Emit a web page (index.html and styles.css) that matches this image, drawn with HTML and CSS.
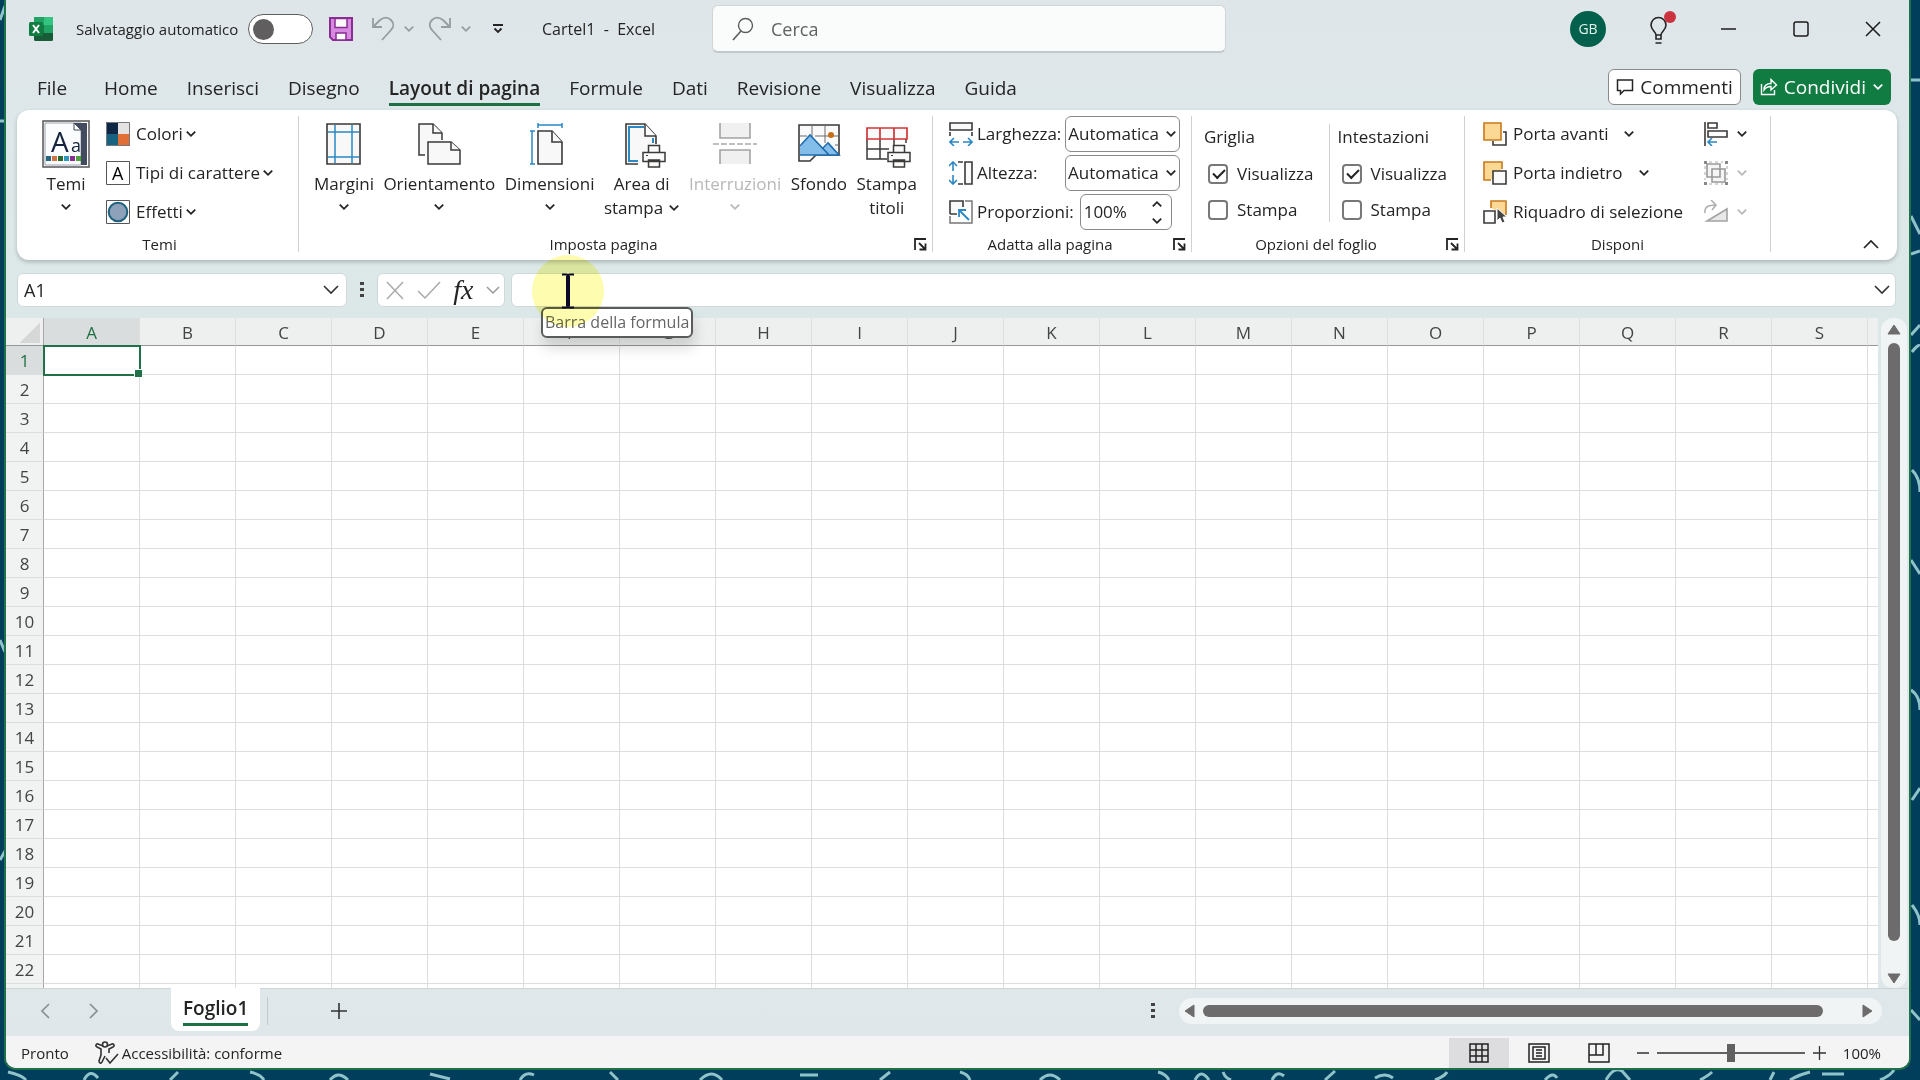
FILE: index.html
```html
<!DOCTYPE html>
<html lang="it">
<head>
    <meta charset="UTF-8">
    <title>Cartel1 - Excel</title>
    <link rel="stylesheet" href="styles.css">
</head>
<body>
    <svg class="symbols" width="0" height="0">
        <symbol id="chev" viewBox="0 0 10 10"><path d="M1.5 3l3.5 3.5L8.5 3" fill="none" stroke="currentColor" stroke-width="1.5"/></symbol>
        <symbol id="launch" viewBox="0 0 13 13"><path d="M1 12V1h11M5 5l6 6M11.5 5.500v6h-6" fill="none" stroke="currentColor" stroke-width="1.8"/></symbol>
        <symbol id="printer" viewBox="0 0 24 24"><path d="M6.500 8V1.500h11V8M1 8.500h22v9H1zM6.500 16h11v7h-11z" fill="#fafafa" stroke="#3b3a39" stroke-width="1.500"/><path d="M4 11.500h2" stroke="#3b3a39"/></symbol>
    </svg>
    <svg class="wallpaper" viewBox="0 0 1920 1080" preserveAspectRatio="none">
        <g fill="none" stroke="#8fc3c9" stroke-width="3">
            <path d="M0 20l5-14M0 121h6M1911 80h9M1911 216l9 18M1911 254l9-3M1912 352q6-8 8-6M1911 335l9-10M1912 470q8 8 8 22M1911 560l9 14M1911 690q9 6 9 20M1912 800l8-12M1912 905q8 10 8 20M1911 1010l9 10M0 640l5 12M0 860l5-9"/>
            <path d="M8 1072q14 3 18 8M84 1080q6-12 14-2M170 1080l8-8M250 1072q10 2 14 8M330 1080q8-10 18 0M430 1074l20 5M520 1080q5-9 14-5M610 1072l8 8M700 1080q12-12 22 0M800 1075h18M880 1080l10-8M960 1072q8 2 10 8M1040 1080q10-10 20 0M1158 1072q8 2 11 8M1195 1080q6-12 14 0M1223 1072q2 6 8 8M1272 1080q5-10 12-4M1325 1080l10-9M1375 1078q10-6 18 0M1435 1080q10-4 12-8M1545 1080q8-9 12-2M1606 1080q8-14 16-9l8 9M1700 1080q8-4 12-8M1770 1080l4-8M1790 1080q8-5 20-8M1822 1074h22M1880 1080q10-4 14-10"/>
        </g>
    </svg>

    <div class="window">
        <header class="titlebar">
            <svg class="app-logo" width="26" height="26" viewBox="0 0 26 26">
                <rect x="6" y="1" width="19" height="24" rx="1.500" fill="#185c37"/>
                <path d="M6 1h10v8H6z" fill="#21a366"/><path d="M16 1h9v8h-9z" fill="#33c481"/><path d="M6 9h10v8H6z" fill="#107c41"/><path d="M16 9h9v8h-9z" fill="#21a366"/>
                <rect x="1" y="6" width="14" height="14" rx="1.500" fill="#107c41"/>
                <path d="M5 9l6 8M11 9l-6 8" stroke="#fff" stroke-width="2"/>
            </svg>
            <label class="autosave" for="autosave">Salvataggio automatico</label>
            <input class="toggle" id="autosave" type="checkbox">
            <button class="icon-btn save" aria-label="Salva">
                <svg width="24" height="24" viewBox="0 0 24 24"><path d="M1 1h22v22H4l-3-3z" fill="#d68be0" stroke="#8a2c93" stroke-width="2"/><path d="M6 1.500h12v9H6z" fill="#fafafa" stroke="#8a2c93" stroke-width="1.500"/><path d="M7 23v-7h10v7z" fill="#fff" stroke="#8a2c93" stroke-width="1.500"/></svg>
            </button>
            <button class="icon-btn undo" aria-label="Annulla">
                <svg width="24" height="26" viewBox="0 0 24 26"><path d="M2 2v9h9M2 11l7-7c4-3 8-3 11 0s3 7 0 10l-9 10" fill="none" stroke="#979ca0" stroke-width="1.800"/></svg>
                <svg class="chev"><use href="#chev"/></svg>
            </button>
            <button class="icon-btn undo" aria-label="Ripeti">
                <svg width="24" height="26" viewBox="0 0 24 26"><path d="M22 2v9h-9M22 11l-7-7c-4-3-8-3-11 0s-3 7 0 10l9 10" fill="none" stroke="#979ca0" stroke-width="1.800"/></svg>
                <svg class="chev"><use href="#chev"/></svg>
            </button>
            <button class="icon-btn" aria-label="Personalizza barra">
                <svg width="12" height="12" viewBox="0 0 12 12"><path d="M1 2h10M2.500 5.500L6 9l3.500-3.500" fill="none" stroke="#242424" stroke-width="1.800"/></svg>
            </button>
            <div class="doc-title">Cartel1&nbsp; - &nbsp;Excel</div>
            <div class="search">
                <svg width="24" height="26" viewBox="0 0 24 26"><circle cx="14.500" cy="9.500" r="7" fill="none" stroke="#5c5c5c" stroke-width="1.400"/><path d="M10 15l-8 9" stroke="#5c5c5c" stroke-width="1.600"/></svg>
                <input type="text" placeholder="Cerca" aria-label="Cerca">
            </div>
            <div class="win-controls">
                <button class="avatar">GB</button>
                <button class="icon-btn news" aria-label="Novità">
                    <svg width="32" height="38" viewBox="0 0 32 38"><path d="M9 25c0-3-5-5-5-10a7.500 7.500 0 0 1 15 0c0 5-5 7-5 10zM9 25v4h5v-4M8.500 33h6" transform="translate(1 0)" fill="none" stroke="#242424" stroke-width="1.600"/><circle cx="24" cy="7" r="6" fill="#cc3340"/></svg>
                </button>
                <button class="icon-btn" aria-label="Riduci a icona"><svg width="16" height="16"><path d="M0 8h15" stroke="#1b1b1b" stroke-width="1.500"/></svg></button>
                <button class="icon-btn" aria-label="Ingrandisci"><svg width="16" height="16"><rect x="1" y="1" width="14" height="14" rx="2" fill="none" stroke="#1b1b1b" stroke-width="1.500"/></svg></button>
                <button class="icon-btn" aria-label="Chiudi"><svg width="16" height="16"><path d="M1 1l14 14M15 1L1 15" stroke="#1b1b1b" stroke-width="1.500"/></svg></button>
            </div>
        </header>

        <nav class="tabs">
            <a href="#file" class="first">File</a>
            <a href="#home">Home</a>
            <a href="#inserisci">Inserisci</a>
            <a href="#disegno">Disegno</a>
            <a href="#layout" class="active">Layout di pagina</a>
            <a href="#formule">Formule</a>
            <a href="#dati">Dati</a>
            <a href="#revisione">Revisione</a>
            <a href="#visualizza">Visualizza</a>
            <a href="#guida">Guida</a>
            <div class="tab-actions">
                <button class="comments">
                    <svg width="18" height="18" viewBox="0 0 18 18"><path d="M1.500 2h15v10.500H8L4.500 16v-3.500h-3z" fill="none" stroke="#242424" stroke-width="1.500"/></svg>
                    Commenti
                </button>
                <button class="share">
                    <svg width="18" height="18" viewBox="0 0 18 18"><path d="M1.500 6v10.500h13V12M4 12c0-5 3-6.500 7-6.500V1.500L16.500 7 11 12V8.500C8 8.500 6 9 4 12z" fill="none" stroke="#fff" stroke-width="1.400"/></svg>
                    Condividi
                    <svg class="chev"><use href="#chev"/></svg>
                </button>
            </div>
        </nav>

        <div class="ribbon">
            <section class="group themes">
                <div class="group-body">
                    <button class="big theme-btn">
                        <svg width="48" height="48" viewBox="0 0 48 48">
                            <rect x="1" y="1" width="46" height="46" fill="#fff" stroke="#55565a" stroke-width="1.500"/>
                            <path d="M3 3h36v42H3z" fill="#fbfcfe" stroke="#9ba0aa"/><path d="M32 3h13v42h-6V10z" fill="#434b5e"/><path d="M32 3v7h7z" fill="#fff" stroke="#434b5e"/>
                            <text x="9" y="32" font-size="28" fill="#14233b">A</text><text x="29" y="32" font-size="18" fill="#14233b">a</text>
                            <path d="M4 36h5v5H4z" fill="#28657f"/><path d="M10 36h5v5h-5z" fill="#cf7343"/><path d="M16 36h5v5h-5z" fill="#276b2e"/><path d="M22 36h5v5h-5z" fill="#3196bb"/><path d="M28 36h5v5h-5z" fill="#8b2e92"/><path d="M34 36h5v5h-5z" fill="#4ea33e"/>
                        </svg>
                        <span>Temi</span>
                        <svg class="chev"><use href="#chev"/></svg>
                    </button>
                    <div class="stack">
                        <button class="small">
                            <svg width="24" height="24"><path d="M0 0h12v12H0z" fill="#0f2745"/><path d="M12 0h12v12H12z" fill="#e5e3e1"/><path d="M0 12h12v12H0z" fill="#176280"/><path d="M12 12h12v12H12z" fill="#e16f35"/><path d="M.5.5h23v23H.5z" fill="none" stroke="#74787c"/></svg>
                            Colori <svg class="chev"><use href="#chev"/></svg>
                        </button>
                        <button class="small">
                            <svg width="24" height="24"><path d="M.5.5h23v23H.5z" fill="#fff" stroke="#55565a"/><text x="6" y="19" font-size="18">A</text></svg>
                            Tipi di carattere <svg class="chev"><use href="#chev"/></svg>
                        </button>
                        <button class="small">
                            <svg width="24" height="24"><path d="M.5.5h23v23H.5z" fill="#fff" stroke="#55565a"/><circle cx="12" cy="12" r="9.300" fill="#8ea1bb" stroke="#1d617e" stroke-width="2"/></svg>
                            Effetti <svg class="chev"><use href="#chev"/></svg>
                        </button>
                    </div>
                </div>
                <div class="group-label">Temi</div>
            </section>

            <section class="group page-setup">
                <div class="group-body">
                    <button class="big">
                        <svg width="48" height="48"><path d="M7 4h33v40H7z" fill="#f8f8f8" stroke="#3b3a39" stroke-width="1.600"/><path d="M15 5v38M32 5v38M8 12h31M8 37h31" stroke="#2b88c4" stroke-width="1.500"/></svg>
                        <span>Margini</span>
                        <svg class="chev"><use href="#chev"/></svg>
                    </button>
                    <button class="big">
                        <svg width="48" height="48"><g fill="#f8f8f8" stroke="#3b3a39" stroke-width="1.500"><path d="M10 35H4V4h14l9 9v7"/><path d="M18 4v9h9"/><path d="M13 22h23l9 8v14H13z"/><path d="M36 22v8h9"/></g></svg>
                        <span>Orientamento</span>
                        <svg class="chev"><use href="#chev"/></svg>
                    </button>
                    <button class="big">
                        <svg width="48" height="48"><g fill="#f8f8f8" stroke="#3b3a39" stroke-width="1.600"><path d="M12 11h14l10 11v22H12z"/><path d="M26 11v11h10"/></g><path d="M12 5h24M12 3v5M36 3v5M6 11v33M4 11h5M4 44h5" stroke="#2b88c4" stroke-width="1.500"/></svg>
                        <span>Dimensioni</span>
                        <svg class="chev"><use href="#chev"/></svg>
                    </button>
                    <button class="big">
                        <svg width="48" height="48"><path d="M20 44H8V4h19l11 12v8" fill="#f8f8f8" stroke="#3b3a39" stroke-width="1.600"/><path d="M20 41h-9V7h15M35 18v5" fill="none" stroke="#2b88c4" stroke-width="2"/><path d="M27 4v12h11" fill="#fff" stroke="#3b3a39" stroke-width="1.500"/><svg x="24" y="24" width="24" height="24"><use href="#printer"/></svg></svg>
                        <span>Area di<br>stampa <svg class="chev"><use href="#chev"/></svg></span>
                    </button>
                    <button class="big" disabled>
                        <svg width="48" height="48"><path d="M9 3v15h30V3M9 44V30h30v14" fill="#f0f0f0" stroke="#a3a3a3" stroke-width="1.600"/><path d="M2 24h44" stroke="#a9a9a9" stroke-width="1.500" stroke-dasharray="6 2"/></svg>
                        <span>Interruzioni</span>
                        <svg class="chev"><use href="#chev"/></svg>
                    </button>
                    <button class="big">
                        <svg width="48" height="48"><path d="M4 5h40v30H21l-6 6H4z" fill="#fafafa" stroke="#3b3a39" stroke-width="1.600"/><path d="M17 5v12M30 5v18M4 16h8M20 16h24M40 25h4" stroke="#6a6a6a"/><path d="M5 27l10-12 13 14 6-6 10 12H5z" fill="#83bdea"/><path d="M5 26l10-11 19 20M27 29l6-6 11 12H5" fill="none" stroke="#1d6cae" stroke-width="1.600"/><circle cx="36" cy="15" r="3" fill="#c86d12"/></svg>
                        <span>Sfondo</span>
                    </button>
                    <button class="big">
                        <svg width="48" height="48"><path d="M4 19v20h20M17 19v20M4 29h22M31 19v6M43 19v4" fill="none" stroke="#3b3a39" stroke-width="1.500"/><path d="M4 8h40v11H4zM17 8v11M31 8v11" fill="#fafafa" stroke="#d13438" stroke-width="1.700"/><svg x="24" y="24" width="24" height="24"><use href="#printer"/></svg></svg>
                        <span>Stampa<br>titoli</span>
                    </button>
                </div>
                <div class="group-label">Imposta pagina</div>
                <button class="launcher" aria-label="Imposta pagina"><svg width="13" height="13"><use href="#launch"/></svg></button>
            </section>

            <section class="group scale">
                <div class="group-body stack">
                    <div class="field">
                        <svg width="24" height="24"><path d="M1 1h22v7H1zM1 10v4M23 10v4" fill="#fafafa" stroke="#3b3a39" stroke-width="1.600"/><path d="M10 20H1M14 20h9M5 16l-4 4 4 4M19 16l4 4-4 4" fill="none" stroke="#2b88c4" stroke-width="1.600"/></svg>
                        <label for="larghezza">Larghezza:</label>
                        <div class="select"><select id="larghezza"><option>Automatica</option></select><svg class="chev"><use href="#chev"/></svg></div>
                    </div>
                    <div class="field">
                        <svg width="24" height="24"><path d="M16 1h7v22h-7zM9 1h5M9 23h5" fill="#fafafa" stroke="#3b3a39" stroke-width="1.600"/><path d="M4 10V1M4 14v9M0 5l4-4 4 4M0 19l4 4 4-4" fill="none" stroke="#2b88c4" stroke-width="1.600"/></svg>
                        <label for="altezza">Altezza:</label>
                        <div class="select"><select id="altezza"><option>Automatica</option></select><svg class="chev"><use href="#chev"/></svg></div>
                    </div>
                    <div class="field">
                        <svg width="24" height="24"><path d="M1 14V1h13v6M8 14H1" fill="#fafafa" stroke="#3b3a39" stroke-width="1.600"/><path d="M16 1h7v22H1v-7" fill="none" stroke="#777" stroke-width="1.500"/><path d="M20 20L10 10M10 17v-7h7" fill="none" stroke="#2b88c4" stroke-width="1.800"/></svg>
                        <label for="proporzioni">Proporzioni:</label>
                        <div class="spinner">
                            <input id="proporzioni" type="text" value="100%">
                            <div class="arrows">
                                <svg class="chev up"><use href="#chev"/></svg>
                                <svg class="chev"><use href="#chev"/></svg>
                            </div>
                        </div>
                    </div>
                </div>
                <div class="group-label">Adatta alla pagina</div>
                <button class="launcher" aria-label="Adatta alla pagina"><svg width="13" height="13"><use href="#launch"/></svg></button>
            </section>

            <section class="group sheet-options">
                <div class="group-body">
                    <div class="checks">
                        <h3>Griglia</h3>
                        <label><input type="checkbox" checked>Visualizza</label>
                        <label><input type="checkbox">Stampa</label>
                    </div>
                    <div class="checks">
                        <h3>Intestazioni</h3>
                        <label><input type="checkbox" checked>Visualizza</label>
                        <label><input type="checkbox">Stampa</label>
                    </div>
                </div>
                <div class="group-label">Opzioni del foglio</div>
                <button class="launcher" aria-label="Opzioni del foglio"><svg width="13" height="13"><use href="#launch"/></svg></button>
            </section>

            <section class="group arrange">
                <div class="group-body">
                    <div class="stack">
                        <button class="small wide">
                            <svg width="24" height="24"><path d="M20 10h3v13H10v-4" fill="none" stroke="#3b3a39" stroke-width="1.600"/><path d="M1 1h17v17H1z" fill="#fbd893" stroke="#c8791c" stroke-width="1.600"/></svg>
                            Porta avanti <svg class="chev"><use href="#chev"/></svg>
                        </button>
                        <button class="small wide">
                            <svg width="24" height="24"><path d="M8 19H1V1h18v7" fill="#fbd893" stroke="#c8791c" stroke-width="1.600"/><path d="M10 10h13v13H10z" fill="#fafafa" stroke="#3b3a39" stroke-width="1.600"/></svg>
                            Porta indietro <svg class="chev"><use href="#chev"/></svg>
                        </button>
                        <button class="small">
                            <svg width="24" height="24"><path d="M8 8V1h15v14" fill="#fbd893" stroke="#c8791c" stroke-width="1.600"/><path d="M1 11h11v12H1z" fill="#fafafa" stroke="#3b3a39" stroke-width="1.600"/><path d="M14 8v13l3-3 2 5 3-1-2-5h4z" fill="#444" stroke="#fff"/></svg>
                            Riquadro di selezione
                        </button>
                    </div>
                    <div class="stack">
                        <button class="small" aria-label="Allinea">
                            <svg width="24" height="24"><path d="M1 0v24M4 1h9v5H4zM4 9h19v6H4z" fill="none" stroke="#3b3a39" stroke-width="1.600"/><path d="M13 20H4M8 16l-4 4 4 4" fill="none" stroke="#2b88c4" stroke-width="1.600"/></svg>
                            <svg class="chev"><use href="#chev"/></svg>
                        </button>
                        <button class="small" aria-label="Raggruppa" disabled>
                            <svg width="24" height="24"><path d="M3 3h13v13H3zM8 8h13v13H8z" fill="#eee" fill-opacity=".6" stroke="#999" stroke-width="1.600"/><path d="M0 0h3v3H0zM21 0h3v3h-3zM0 21h3v3H0zM21 21h3v3h-3z" fill="#888"/><path d="M5 1h14M5 23h14M1 5v14M23 5v14" stroke="#aaa" stroke-dasharray="3 3"/></svg>
                            <svg class="chev"><use href="#chev"/></svg>
                        </button>
                        <button class="small" aria-label="Ruota" disabled>
                            <svg width="24" height="24"><path d="M3 21L23 9v12z" fill="#e8e8e8" stroke="#a3a3a3" stroke-width="1.600"/><path d="M1 13c-1-6 3-8 11-8M7 0l5 5-4 5" fill="none" stroke="#b0b0b0" stroke-width="1.600"/></svg>
                            <svg class="chev"><use href="#chev"/></svg>
                        </button>
                    </div>
                </div>
                <div class="group-label">Disponi</div>
            </section>
            <button class="collapse" aria-label="Comprimi barra multifunzione"><svg width="16" height="10"><path d="M1 9l7-7 7 7" fill="none" stroke="#242424" stroke-width="1.600"/></svg></button>
        </div>

        <div class="formula-bar">
            <div class="name-box">
                <input type="text" value="A1" aria-label="Casella Nome">
                <svg width="16" height="10"><path d="M1 1l7 7 7-7" fill="none" stroke="#333" stroke-width="1.600"/></svg>
            </div>
            <svg class="dots" width="4" height="18"><path d="M0 1h4v3H0zM0 7h4v3H0zM0 13h4v3H0z" fill="#444"/></svg>
            <div class="fx-box">
                <svg width="18" height="20"><path d="M1 2l16 17M17 2L1 19" stroke="#a9a9a9" stroke-width="1.500"/></svg>
                <svg width="24" height="20"><path d="M1 11l7 7L23 2" fill="none" stroke="#a9a9a9" stroke-width="1.500"/></svg>
                <button class="fx">fx</button>
                <svg class="fx-chev" width="14" height="9"><path d="M1 1l6 6 6-6" fill="none" stroke="#999" stroke-width="1.500"/></svg>
            </div>
            <div class="formula-input">
                <input type="text" aria-label="Barra della formula">
                <svg width="16" height="10"><path d="M1 1l7 7 7-7" fill="none" stroke="#333" stroke-width="1.600"/></svg>
                <div class="tooltip">Barra della formula</div>
                <div class="halo"></div>
                <svg class="caret" width="14" height="36"><path d="M1 1.500h4q2 0 2 2 0-2 2-2h4M1 34.500h4q2 0 2-2 0 2 2 2h4" fill="none" stroke="#0c0a28" stroke-width="2"/><path d="M7 3v30" stroke="#0c0a28" stroke-width="4"/></svg>
            </div>
        </div>

        <main class="sheet-area">
            <div class="grid-wrap">
                <table class="grid" id="grid"></table>
            </div>
            <div class="vscroll">
                <svg width="14" height="11"><path d="M7 1l6 9H1z" fill="#6d6b6c" stroke="#6d6b6c" stroke-linejoin="round"/></svg>
                <div class="thumb"></div>
                <svg width="14" height="11"><path d="M7 10L1 1h12z" fill="#6d6b6c" stroke="#6d6b6c" stroke-linejoin="round"/></svg>
            </div>
        </main>

        <div class="sheet-bar">
            <button class="icon-btn" aria-label="Foglio precedente"><svg width="10" height="16"><path d="M9 1L2 8l7 7" fill="none" stroke="#8b9092" stroke-width="1.700"/></svg></button>
            <button class="icon-btn" aria-label="Foglio successivo"><svg width="10" height="16"><path d="M1 1l7 7-7 7" fill="none" stroke="#8b9092" stroke-width="1.700"/></svg></button>
            <a href="#foglio1" class="sheet-tab"><span>Foglio1</span></a>
            <button class="icon-btn add" aria-label="Nuovo foglio"><svg width="18" height="18"><path d="M9 1v16M1 9h16" stroke="#333" stroke-width="1.600"/></svg></button>
            <svg class="dots" width="4" height="18"><path d="M0 1h4v3H0zM0 7h4v3H0zM0 13h4v3H0z" fill="#444"/></svg>
            <div class="hscroll">
                <svg width="11" height="14"><path d="M1 7l9-6v12z" fill="#6d6b6c" stroke="#6d6b6c" stroke-linejoin="round"/></svg>
                <div class="thumb"></div>
                <svg width="11" height="14"><path d="M10 7L1 1v12z" fill="#6d6b6c" stroke="#6d6b6c" stroke-linejoin="round"/></svg>
            </div>
        </div>

        <footer class="status">
            <span>Pronto</span>
            <svg class="access" width="24" height="24" viewBox="0 0 24 24"><g fill="none" stroke="#333" stroke-width="1.600"><circle cx="10" cy="3.500" r="2.500"/><path d="M8 5L3 3C1 2.500 0 5 2 6l4 2v6l-2 6c0 2 2 3 3 1l3-6M12 5l5-2c2-.5 3 2 1 3l-4 2v4M11 17l4 5 8-9"/></g></svg>
            <span>Accessibilità: conforme</span>
            <div class="views">
                <button class="on" aria-label="Normale"><svg width="20" height="20"><path d="M1 1h18v18H1zM7 1v18M13 1v18M1 7h18M1 13h18" fill="none" stroke="#222" stroke-width="1.500"/></svg></button>
                <button aria-label="Layout di pagina"><svg width="22" height="20"><path d="M1 1h20v18H1zM5 4h12v12H5zM8 7h6M8 10h6M8 13h6" fill="none" stroke="#222" stroke-width="1.500"/></svg></button>
                <button aria-label="Anteprima interruzioni"><svg width="22" height="20"><path d="M1 1h20v18H1zM1 12h14V1M8 1v11" fill="none" stroke="#222" stroke-width="1.500"/></svg></button>
            </div>
            <div class="zoom">
                <button class="icon-btn" aria-label="Riduci"><svg width="12" height="16"><path d="M0 8h12" stroke="#333" stroke-width="1.500"/></svg></button>
                <input type="range" min="0" max="200" value="100" aria-label="Zoom">
                <button class="icon-btn" aria-label="Ingrandisci zoom"><svg width="13" height="16"><path d="M0 8h13M6.500 1v14" stroke="#333" stroke-width="1.300"/></svg></button>
                <span>100%</span>
            </div>
        </footer>
    </div>

    <script src="script.js"></script>
</body>
</html>
```
FILE: styles.css
```css
* {
    box-sizing: border-box;
}
body {
    margin: 0;
    height: 100vh;
    overflow: hidden;
    display: flex;
    padding: 0 9px 10px 4px;
    background: #003e5c;
    font-family: "Open Sans", "Noto Sans", sans-serif;
    font-size: 17px;
    line-height: 24px;
    color: #242424;
}
button, input, select {
    font: inherit;
    color: inherit;
    margin: 0;
}
button {
    padding: 0;
    border: 0;
    background: none;
}
a {
    color: inherit;
    text-decoration: none;
}
svg {
    display: block;
    flex: none;
}
.symbols {
    position: absolute;
}
.wallpaper {
    position: absolute;
    top: 0;
    left: 0;
    width: 100%;
    height: 100%;
}
.chev {
    width: 12px;
    height: 12px;
}
.window {
    position: relative;
    flex: 1;
    min-width: 0;
    display: flex;
    flex-direction: column;
    border: 2px solid #207049;
    border-top: 0;
    border-radius: 0 0 12px 12px;
    background: linear-gradient(#dfe6ea, #dce8e8 300px, #dfe7ea);
    overflow: hidden;
}

/* title bar */
.titlebar {
    display: flex;
    align-items: center;
    height: 58px;
    padding: 0 28px 0 22px;
    font-size: 16px;
}
.icon-btn {
    display: flex;
    align-items: center;
    justify-content: center;
}
.autosave {
    margin-left: 22px;
    width: 172px;
    font-size: 15px;
    white-space: nowrap;
}
.toggle {
    appearance: none;
    width: 65px;
    height: 30px;
    border: 1px solid #605e5c;
    border-radius: 15px;
    background: #fff;
}
.toggle::before {
    content: "";
    display: block;
    width: 21px;
    height: 21px;
    margin: 4px;
    border-radius: 50%;
    background: #605e5f;
}
.save {
    margin: 0 18px 0 16px;
}
.undo {
    gap: 8px;
    margin-right: 13px;
    color: #979ca0;
}
.undo + .undo {
    margin-right: 20px;
}
.doc-title {
    margin-left: 38px;
    width: 170px;
}
.search {
    display: flex;
    align-items: center;
    gap: 16px;
    width: 514px;
    height: 48px;
    padding: 0 18px;
    border: 1px solid #d0d5d7;
    border-bottom: 2px solid #c3c8ca;
    border-radius: 6px;
    background: #fafbfb;
}
.search input {
    flex: 1;
    border: 0;
    background: none;
    padding: 0;
    font-size: 18px;
}
.search input::placeholder {
    color: #616161;
    opacity: 1;
}
.win-controls {
    display: flex;
    align-items: center;
    gap: 56px;
    margin-left: auto;
}
.avatar {
    width: 36px;
    height: 36px;
    margin-right: -16px;
    border-radius: 50%;
    background: #03604c;
    color: #e4f3ee;
    font-size: 14px;
}
.win-controls .news {
    margin-right: -13px;
}

/* ribbon tabs */
.tabs {
    display: flex;
    align-items: center;
    gap: 29px;
    height: 52px;
    padding: 0 18px 0 31px;
    font-size: 19px;
}
.tabs a {
    margin-top: 12px;
    height: 32px;
    line-height: 28px;
    border-bottom: 3px solid transparent;
}
.tabs .first {
    margin-right: 8px;
}
.tabs .active {
    font-weight: 600;
    border-bottom-color: #1d7044;
}
.tab-actions {
    display: flex;
    gap: 12px;
    margin-left: auto;
    padding-top: 6px;
}
.tab-actions button {
    display: flex;
    align-items: center;
    gap: 6px;
    height: 36px;
    padding: 0 7px;
    border-radius: 6px;
}
.tab-actions .comments {
    border: 1px solid #8a8a8a;
    background: #fff;
}
.tab-actions .share {
    background: #107c41;
    color: #fff;
}

/* ribbon */
.ribbon {
    position: relative;
    display: flex;
    margin: 0 12px 0 11px;
    height: 150px;
    padding-top: 6px;
    border-radius: 12px;
    background: #fff;
    box-shadow: 0 2px 4px rgba(0, 0, 0, .22);
}
.group {
    position: relative;
    height: 136px;
    border-right: 1px solid #d0d0d0;
}
.group-body {
    display: flex;
    height: 116px;
}
.group-label {
    text-align: center;
    font-size: 15px;
}
.launcher {
    position: absolute;
    right: 5px;
    bottom: 1px;
}
.big {
    display: flex;
    flex-direction: column;
    align-items: center;
    padding-top: 4px;
}
.big span {
    margin-top: 4px;
    white-space: nowrap;
}
.big > .chev {
    margin-top: 5px;
}
.big span .chev {
    display: inline-block;
}
button:disabled {
    color: #b8b8b8;
}
.stack {
    display: flex;
    flex-direction: column;
    gap: 3px;
}
.small {
    display: flex;
    align-items: center;
    gap: 6px;
    height: 36px;
    white-space: nowrap;
}
.small .chev {
    margin-left: -4px;
}
.themes {
    width: 282px;
}
.themes .group-body {
    padding-left: 25px;
    gap: 16px;
}
.themes .group-label {
    padding-left: 4px;
}
.page-setup {
    width: 634px;
}
.page-setup .group-body {
    justify-content: space-between;
    padding: 0 15px;
}
.page-setup .group-label, .scale .group-label, .sheet-options .group-label {
    padding-right: 24px;
}
.scale {
    width: 259px;
}
.scale .group-body {
    padding: 0 11px 0 16px;
}
.field {
    display: flex;
    align-items: center;
    gap: 4px;
    height: 36px;
}
.select {
    position: relative;
    margin-left: auto;
    width: 115px;
}
.select select {
    appearance: none;
    width: 100%;
    height: 36px;
    padding: 0 2px;
    border: 1px solid #8a8a8a;
    border-radius: 6px;
    background: #fff;
}
.select .chev {
    position: absolute;
    right: 3px;
    top: 12px;
}
.spinner {
    display: flex;
    align-items: center;
    width: 92px;
    height: 36px;
    margin-left: 2px;
    padding: 0 8px 0 3px;
    border: 1px solid #8a8a8a;
    border-radius: 6px;
}
.spinner input {
    flex: 1;
    min-width: 0;
    padding: 0;
    border: 0;
}
.arrows {
    display: flex;
    flex-direction: column;
    gap: 5px;
}
.up {
    transform: rotate(180deg);
}
.sheet-options {
    width: 273px;
}
.sheet-options .group-body {
    padding: 8px 0 0 12px;
}
.checks {
    height: 98px;
    width: 125px;
}
.checks + .checks {
    border-left: 1px solid #d0d0d0;
    padding-left: 8px;
    width: 136px;
}
.checks h3 {
    margin: 0 0 6px;
    font-size: 17px;
    font-weight: 400;
    line-height: 26px;
}
.checks label {
    display: flex;
    align-items: center;
    gap: 9px;
    height: 36px;
    padding-left: 4px;
}
.checks input {
    appearance: none;
    flex: none;
    width: 20px;
    height: 20px;
    border: 2px solid #77787a;
    border-radius: 4px;
}
.checks input:checked::before {
    content: "";
    display: block;
    width: 10px;
    height: 5px;
    margin: 3px 0 0 3px;
    border: solid #242424;
    border-width: 0 0 2px 2px;
    transform: rotate(-45deg);
}
.arrange {
    width: 306px;
}
.arrange .group-body {
    padding: 0 22px 0 18px;
    justify-content: space-between;
}
.wide .chev {
    margin-left: 9px;
}
.arrange .stack + .stack .chev {
    margin-left: 2px;
}
.collapse {
    margin: auto 18px 11px auto;
}

/* formula bar */
.formula-bar {
    display: flex;
    align-items: center;
    height: 58px;
    padding: 2px 13px 0 11px;
}
.name-box, .fx-box, .formula-input {
    display: flex;
    align-items: center;
    height: 34px;
    border: 1px solid #d0d8d9;
    border-radius: 6px;
    background: #fff;
}
.name-box {
    width: 330px;
    padding: 0 7px 0 6px;
}
.name-box input, .formula-input input {
    flex: 1;
    min-width: 0;
    padding: 0;
    border: 0;
    background: none;
    font-size: 18px;
}
.formula-bar > .dots {
    margin: 0 13px;
}
.fx-box {
    width: 128px;
    padding: 0 4px 0 8px;
    justify-content: space-between;
}
.fx {
    font-family: "Liberation Serif", serif;
    font-style: italic;
    font-size: 28px;
}
.formula-input {
    position: relative;
    flex: 1;
    margin-left: 6px;
    padding: 0 5px;
}
.tooltip {
    position: absolute;
    z-index: 2;
    left: 29px;
    top: 33px;
    height: 31px;
    padding: 0 2px;
    border: 2px solid #5b5b5b;
    border-radius: 6px;
    background: #fff;
    box-shadow: 2px 10px 14px rgba(0, 0, 0, .14);
    color: #666;
    font-size: 16px;
    line-height: 26px;
    white-space: nowrap;
}
.halo {
    position: absolute;
    z-index: 3;
    left: 20px;
    top: -19px;
    width: 72px;
    height: 72px;
    border-radius: 50%;
    background: #fdfcaf;
    mix-blend-mode: multiply;
}
.caret {
    position: absolute;
    z-index: 4;
    left: 49px;
    top: -1px;
}

/* sheet */
.sheet-area {
    flex: 1;
    min-height: 0;
    display: flex;
}
.grid-wrap {
    flex: 1;
    min-width: 0;
    overflow: hidden;
    background: #fff;
}
.grid {
    table-layout: fixed;
    width: 1958px;
    border-collapse: separate;
    border-spacing: 0;
}
.grid th, .grid td {
    width: 96px;
    height: 29px;
    padding: 2px 0 0;
    border-right: 1px solid #dedede;
    border-bottom: 1px solid #dedede;
    font-weight: 400;
    color: #444;
}
.grid thead th {
    height: 28px;
    line-height: 25px;
    background: #eef0f0;
    border-bottom-color: #999;
}
.grid tr th:first-child {
    width: 38px;
    border-right-color: #a8a8a8;
    background: #f1f2f2;
}
.grid thead tr .corner:first-child {
    background: linear-gradient(135deg, transparent 50%, #d6d8d8 50%) no-repeat 14px 5px / 20px 20px #eef0f0;
}
.grid thead .current, .grid tbody tr .current:first-child {
    background: #dadddd;
    color: #1d7044;
}
.grid .selected {
    position: relative;
    outline: 2px solid #207049;
    outline-offset: -1px;
}
.grid .selected::after {
    content: "";
    position: absolute;
    right: -3px;
    bottom: -3px;
    width: 7px;
    height: 7px;
    border: solid #fff;
    border-width: 1px 0 0 1px;
    background: #207049;
}
.vscroll {
    display: flex;
    flex-direction: column;
    align-items: center;
    gap: 8px;
    width: 26px;
    margin: 0 2px 0 3px;
    padding: 6px 0 4px;
    border-radius: 12px;
    background: #f1f4f4;
}
.vscroll .thumb {
    flex: 1;
    width: 12px;
    margin-bottom: 24px;
    border-radius: 6px;
    background: #6d6b6c;
}

/* sheet tabs */
.sheet-bar {
    display: flex;
    align-items: center;
    height: 48px;
    padding: 0 27px 4px 34px;
    border-top: 1px solid #cfd5d6;
}
.sheet-bar .icon-btn + .icon-btn {
    margin-left: 39px;
}
.sheet-tab {
    align-self: flex-start;
    margin: -1px 0 0 72px;
    height: 43px;
    padding: 6px 12px 0;
    border-radius: 0 0 8px 8px;
    background: #fff;
    font-size: 19px;
    font-weight: 600;
}
.sheet-tab span {
    display: block;
    height: 32px;
    line-height: 28px;
    border-bottom: 3px solid #1d7044;
}
.sheet-bar .add {
    margin-left: 7px;
    padding-left: 62px;
    height: 28px;
    border-left: 1px solid #c3c9ca;
}
.sheet-bar .dots {
    margin: 0 24px 0 auto;
}
.hscroll {
    display: flex;
    align-items: center;
    gap: 8px;
    width: 703px;
    height: 26px;
    padding: 0 9px 0 5px;
    border-radius: 13px;
    background: #f1f4f4;
}
.hscroll .thumb {
    flex: 1;
    height: 12px;
    margin-right: 31px;
    border-radius: 6px;
    background: #6d6b6c;
}

/* status bar */
.status {
    display: flex;
    align-items: center;
    height: 32px;
    padding: 2px 28px 0 15px;
    background: #f4f4f5;
    font-size: 15px;
}
.access {
    margin: 0 3px 0 26px;
}
.views {
    display: flex;
    margin-left: auto;
}
.views button {
    display: flex;
    align-items: center;
    justify-content: center;
    width: 60px;
    height: 30px;
}
.views .on {
    background: #dddcde;
}
.zoom {
    display: flex;
    align-items: center;
    gap: 8px;
    margin-left: 8px;
}
.zoom input {
    appearance: none;
    width: 148px;
    height: 18px;
    background: linear-gradient(#616161, #616161) no-repeat center / 100% 2px;
}
.zoom input::-webkit-slider-thumb {
    appearance: none;
    width: 8px;
    height: 18px;
    background: #616161;
}
.zoom span {
    margin-left: 9px;
}
```
FILE: script.js
```js
var grid = document.getElementById("grid");
var letters = "ABCDEFGHIJKLMNOPQRS";
var cols = 20; // the last column and the last row are only partly in view
var rows = 23;

var html = "<thead><tr><th class='corner'></th>";
for (var c = 0; c < cols; c++) {
    html += "<th" + (c === 0 ? " class='current'" : "") + ">" + letters.charAt(c) + "</th>";
}
html += "</tr></thead><tbody>";

for (var r = 1; r <= rows; r++) {
    html += "<tr><th" + (r === 1 ? " class='current'" : "") + ">" + (r < rows ? r : "") + "</th>";
    for (c = 0; c < cols; c++) {
        html += "<td" + (r === 1 && c === 0 ? " class='selected'" : "") + "></td>";
    }
    html += "</tr>";
}
grid.innerHTML = html + "</tbody>";
```
